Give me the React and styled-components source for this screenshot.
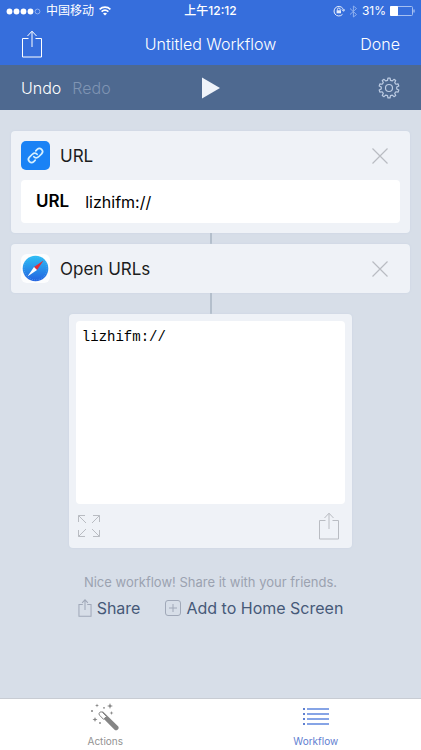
import React, { useState } from "react";
import styled, { createGlobalStyle } from "styled-components";

const COLORS = {
  BLUE: "#366edc",
  SLATE: "#4e6990",
  BACKGROUND: "#d7dee8",
  CARD: "#eff2f7",
  LINE: "#b4bfcc",
  ICON: "#b9bcc2",
  MUTED: "#9ba2b0",
  TEXT: "#465978",
  WHITE: "#ffffff",
};

const GEAR_TEETH = 10;

// outline of the settings wheel, four corners for each tooth
const gearPoints = () => {
  const points = [];
  for (let i = 0; i < GEAR_TEETH; i++) {
    [[-0.3, 7.8], [-0.17, 10], [0.17, 10], [0.3, 7.8]].forEach(([offset, radius]) => {
      const angle = ((i + offset) / GEAR_TEETH) * Math.PI * 2;
      const x = 11 + radius * Math.sin(angle);
      const y = 11 - radius * Math.cos(angle);
      points.push(`${x.toFixed(2)},${y.toFixed(2)}`);
    });
  }
  return points.join(" ");
};

const GearIcon = () => (
  <svg width="22" height="22" viewBox="0 0 22 22" fill="none" stroke="#bdcce3" strokeWidth="1.2" strokeLinejoin="round">
    <polygon points={gearPoints()} />
    <circle cx="11" cy="11" r="3.5" />
  </svg>
);

const ShareIcon = ({ width = 22, height = 28, stroke = 1 }) => (
  <svg width={width} height={height} viewBox="0 0 22 28" fill="none" stroke="currentColor" strokeWidth={stroke}>
    <path d="M7.5 8.5H1.5V27H20.5V8.5H14.5M11 17V1.5M6.5 6L11 1.2L15.5 6" />
  </svg>
);

const CloseIcon = () => (
  <svg width="16" height="16" viewBox="0 0 16 16" stroke="currentColor" strokeWidth="1.2">
    <path d="M.5 .5L15.5 15.5M15.5 .5L.5 15.5" />
  </svg>
);

const ExpandIcon = () => (
  <svg width="22" height="22" viewBox="0 0 22 22" fill="none" stroke="currentColor">
    <path d="M.5 7V.5H7M.5 .5L8 8M15 .5H21.5V7M21.5 .5L14 8M.5 15V21.5H7M.5 21.5L8 14M15 21.5H21.5V15M21.5 21.5L14 14" />
  </svg>
);

const PlusIcon = () => (
  <svg width="16" height="16" viewBox="0 0 16 16" fill="none" stroke="currentColor">
    <rect x=".5" y=".5" width="15" height="15" rx="2.5" />
    <path d="M8 4V12M4 8H12" />
  </svg>
);

const PlayIcon = () => (
  <svg width="18" height="22" viewBox="0 0 18 22" fill="#eff3fa">
    <path d="M0 .5L18 11L0 21.5Z" />
  </svg>
);

const WifiIcon = () => (
  <svg width="12" height="10" viewBox="0 0 12 10" fill="none" stroke="#fff" strokeWidth="1.6">
    <path d="M.6 3.4C3.6 .4 8.4 .4 11.4 3.4M2.6 5.7C4.6 3.8 7.4 3.8 9.4 5.7" />
    <path d="M4 7.4C5.2 6.4 6.8 6.4 8 7.4L6 9.5Z" fill="#fff" stroke="none" />
  </svg>
);

const LockIcon = () => (
  <svg width="12" height="12" viewBox="0 0 12 12" fill="none" stroke="#e4ecfb">
    <path d="M9.5 9.3A4.8 4.8 0 1 1 10.6 5.5M8.9 4.6L10.6 6.3L11.9 4.3" />
    <path d="M4.4 5.5V4.4A1.4 1.4 0 0 1 7.2 4.4V5.5" />
    <rect x="3.6" y="5.3" width="4.4" height="3" fill="#e4ecfb" stroke="none" />
  </svg>
);

const BluetoothIcon = () => (
  <svg width="9" height="13" viewBox="0 0 9 13" fill="none" stroke="#8fb0ef">
    <path d="M1 3.5L7.5 9.5L4.4 12V1L7.5 3.5L1 9.5" />
  </svg>
);

const BatteryIcon = () => (
  <svg width="25" height="10" viewBox="0 0 25 10">
    <rect x=".5" y=".5" width="22" height="9" rx="1" fill="none" stroke="#a5bff1" />
    <rect width="8" height="10" rx="1" fill="#fff" />
    <path d="M23.5 3.5H24.5V6.5H23.5Z" fill="#c8d8f6" />
  </svg>
);

const SignalIcon = () => (
  <svg width="35" height="7" viewBox="0 0 35 7" fill="#fff">
    <circle cx="3.5" cy="3.5" r="2.9" />
    <circle cx="10.5" cy="3.5" r="2.9" />
    <circle cx="17.5" cy="3.5" r="2.9" />
    <circle cx="24.5" cy="3.5" r="2.9" />
    <circle cx="31.5" cy="3.5" r="2.4" fill="none" stroke="#a5bff1" strokeWidth=".8" />
  </svg>
);

const LinkIcon = () => (
  <svg width="29" height="29" viewBox="0 0 29 29">
    <rect width="29" height="29" rx="5" fill="#1a82f5" />
    <g transform="rotate(-45 14.5 14.5)" fill="none" stroke="#d6f0ff" strokeWidth="1.7" strokeLinecap="round">
      <path d="M11 17.6H9A3.1 3.1 0 0 1 9 11.4H13.5A3.1 3.1 0 0 1 16.5 14.8" />
      <path d="M18 11.4H20A3.1 3.1 0 0 1 20 17.6H15.5A3.1 3.1 0 0 1 12.5 14.2" />
    </g>
  </svg>
);

const CompassIcon = () => (
  <svg width="29" height="29" viewBox="0 0 29 29">
    <defs>
      <linearGradient id="sky" x1="0" y1="0" x2="0" y2="1">
        <stop offset="0" stopColor="#2cc0f5" />
        <stop offset="1" stopColor="#2462e0" />
      </linearGradient>
    </defs>
    <rect width="29" height="29" rx="6" fill="#fcfdfe" />
    <circle cx="14.5" cy="14.5" r="12.8" fill="url(#sky)" />
    <circle cx="14.5" cy="14.5" r="11.4" fill="none" stroke="#5fb0f4" strokeDasharray=".6 1.7" />
    <path d="M22.5 6.5L16 16L13 13Z" fill="#e52d35" />
    <path d="M6.5 22.5L16 16L13 13Z" fill="#fff" />
  </svg>
);

const WandIcon = () => (
  <svg width="30" height="28" viewBox="0 0 30 28" fill="#858585">
    <path d="M12.7 8.2L9.2 11.3L24.3 26.5A2.4 2.4 0 0 0 27.8 23Z" />
    <path d="M12.5 9.5A2 2 0 0 0 9.6 12.3L13.5 16.3L16.5 13.5Z" fill="#fff" stroke="#858585" />
    <path d="M20 0L20.8 2.2L23 3L20.8 3.8L20 6L19.2 3.8L17 3L19.2 2.2ZM7 .5L7.5 2L9 2.5L7.5 3L7 4.5L6.5 3L5 2.5L6.5 2ZM5 14L5.7 15.8L7.5 16.5L5.7 17.2L5 19L4.3 17.2L2.5 16.5L4.3 15.8ZM21.5 8L22 9.5L23.5 10L22 10.5L21.5 12L21 10.5L19.5 10L21 9.5Z" />
    <circle cx="2" cy="8" r="1" />
    <circle cx="14" cy="4.8" r=".9" />
    <circle cx="10" cy="20" r=".9" />
  </svg>
);

const ListIcon = () => (
  <svg width="28" height="18" viewBox="0 0 28 18" fill="#5f80d1">
    {[0, 5, 10, 15].map((y) => (
      <g key={y}>
        <rect x="1" y={y} width="2" height="2" />
        <rect x="5" y={y} width="22" height="2" fill="#86a4e6" />
      </g>
    ))}
  </svg>
);

function App() {
  const [url, setUrl] = useState("lizhifm://");

  return (
    <Page>
      <GlobalStyle />
      <StatusBar>
        <StatusGroup>
          <SignalIcon />
          <span>中国移动</span>
          <WifiIcon />
        </StatusGroup>
        <Clock>上午12:12</Clock>
        <StatusGroup $end>
          <LockIcon />
          <BluetoothIcon />
          <span>31%</span>
          <BatteryIcon />
        </StatusGroup>
      </StatusBar>

      <NavBar>
        <BarGroup>
          <PlainButton aria-label="Share workflow"><ShareIcon /></PlainButton>
        </BarGroup>
        <Title>Untitled Workflow</Title>
        <BarGroup $end>
          <PlainButton>Done</PlainButton>
        </BarGroup>
      </NavBar>

      <Toolbar>
        <BarGroup>
          <PlainButton>Undo</PlainButton>
          <PlainButton disabled>Redo</PlainButton>
        </BarGroup>
        <PlainButton aria-label="Run"><PlayIcon /></PlainButton>
        <BarGroup $end>
          <PlainButton aria-label="Settings"><GearIcon /></PlainButton>
        </BarGroup>
      </Toolbar>

      <Content>
        <Card>
          <CardHeader>
            <LinkIcon />
            <CardTitle>URL</CardTitle>
            <IconButton aria-label="Remove URL"><CloseIcon /></IconButton>
          </CardHeader>
          <Field>
            <label htmlFor="url">URL</label>
            <input id="url" type="text" value={url} onChange={(e) => setUrl(e.target.value)} />
          </Field>
        </Card>
        <Connector $height={11} />
        <Card>
          <CardHeader>
            <CompassIcon />
            <CardTitle>Open URLs</CardTitle>
            <IconButton aria-label="Remove Open URLs"><CloseIcon /></IconButton>
          </CardHeader>
        </Card>
        <Connector $height={21} />
        <Preview>
          <Output aria-label="Result" readOnly value={url} />
          <PreviewFooter>
            <IconButton aria-label="Expand"><ExpandIcon /></IconButton>
            <IconButton aria-label="Share result"><ShareIcon /></IconButton>
          </PreviewFooter>
        </Preview>
        <Hint>Nice workflow! Share it with your friends.</Hint>
        <ShareRow>
          <ShareButton><ShareIcon width={14} height={18} stroke={1.6} />Share</ShareButton>
          <ShareButton><PlusIcon />Add to Home Screen</ShareButton>
        </ShareRow>
      </Content>

      <TabBar>
        <Tab href="#actions"><WandIcon />Actions</Tab>
        <Tab href="#workflow" $active><ListIcon />Workflow</Tab>
      </TabBar>
    </Page>
  );
}

const GlobalStyle = createGlobalStyle`
  * {
    box-sizing: border-box;
  }
  body {
    margin: 0;
    font-family: Inter, "Noto Sans CJK SC", sans-serif;
  }
  button, input {
    font-family: inherit;
  }
  svg {
    display: block;
    flex-shrink: 0;
  }
`;

const Page = styled.div`
  min-height: 100vh;
  display: flex;
  flex-direction: column;
  background-color: ${COLORS.BACKGROUND};
`;

const StatusBar = styled.div`
  height: 22px;
  padding: 0 6px;
  display: grid;
  grid-template-columns: 1fr auto 1fr;
  align-items: center;
  font-size: 12px;
  line-height: 22px;
  color: ${COLORS.WHITE};
  background-color: ${COLORS.BLUE};
`;

const StatusGroup = styled.div`
  display: flex;
  align-items: center;
  justify-content: ${(props) => (props.$end ? "flex-end" : "flex-start")};
  gap: ${(props) => (props.$end ? 4 : 5)}px;
`;

const Clock = styled.span`
  font-weight: 500;
`;

const Bar = styled.div`
  display: grid;
  grid-template-columns: 1fr auto 1fr;
  align-items: center;
  padding: 0 21px;
  color: ${COLORS.WHITE};
`;

const NavBar = styled(Bar)`
  height: 43px;
  font-weight: 300;
  background-color: ${COLORS.BLUE};
`;

const Toolbar = styled(Bar)`
  height: 45px;
  font-weight: 300;
  background-color: ${COLORS.SLATE};
`;

const BarGroup = styled.div`
  display: flex;
  justify-content: ${(props) => (props.$end ? "flex-end" : "flex-start")};
  gap: 11px;
`;

const PlainButton = styled.button`
  padding: 0;
  border: none;
  background: none;
  font-size: 16px;
  font-weight: inherit;
  line-height: 24px;
  color: inherit;

  &:disabled {
    color: #7f94b3;
  }
`;

const Title = styled.h1`
  margin: 0;
  font-size: 16px;
  line-height: 24px;
  font-weight: inherit;
`;

const Content = styled.main`
  flex: 1;
  padding: 21px 11px;
  display: flex;
  flex-direction: column;
  align-items: center;
`;

const Card = styled.section`
  width: 100%;
  border-radius: 4px;
  background-color: ${COLORS.CARD};
  box-shadow: 0 0 2px #c9d2df;
`;

const CardHeader = styled.div`
  height: 49px;
  padding: 0 22px 0 10px;
  display: flex;
  align-items: center;
  gap: 10px;
`;

const CardTitle = styled.h2`
  flex: 1;
  margin: 0;
  font-size: 17px;
  line-height: 24px;
  font-weight: 400;
  color: #1c1d20;
`;

const IconButton = styled.button`
  padding: 0;
  border: none;
  background: none;
  color: ${COLORS.ICON};
`;

const Field = styled.div`
  height: 53px;
  padding: 0 10px 10px;
  display: flex;

  label {
    padding: 0 16px 0 15px;
    border-radius: 4px 0 0 4px;
    font-size: 17px;
    line-height: 43px;
    font-weight: 600;
    background-color: ${COLORS.WHITE};
  }
  input {
    flex: 1;
    min-width: 0;
    padding: 0;
    border: none;
    border-radius: 0 4px 4px 0;
    font-size: 16px;
    color: #000;
    background-color: ${COLORS.WHITE};
  }
`;

const Connector = styled.div`
  width: 2px;
  height: ${(props) => props.$height}px;
  background-color: ${COLORS.LINE};
`;

const Preview = styled.section`
  width: 71%;
  padding: 7px 7px 0;
  border-radius: 4px;
  background-color: ${COLORS.CARD};
  box-shadow: 0 0 2px #c9d2df;
`;

const Output = styled.textarea`
  display: block;
  width: 100%;
  height: 183px;
  padding: 6px;
  border: none;
  border-radius: 4px;
  resize: none;
  font-family: "Liberation Mono", monospace;
  font-size: 14px;
  line-height: 20px;
  color: #000;
  background-color: ${COLORS.WHITE};
`;

const PreviewFooter = styled.div`
  height: 44px;
  padding: 0 5px 0 2px;
  display: flex;
  align-items: center;
  justify-content: space-between;
`;

const Hint = styled.p`
  margin: 24px 0 4px;
  font-size: 13px;
  line-height: 20px;
  color: ${COLORS.MUTED};
`;

const ShareRow = styled.div`
  display: flex;
  gap: 25px;
`;

const ShareButton = styled.button`
  padding: 0;
  display: flex;
  align-items: center;
  gap: 5px;
  border: none;
  background: none;
  font-size: 16px;
  line-height: 24px;
  color: ${COLORS.TEXT};

  svg {
    color: #a0a8b8;
  }
`;

const TabBar = styled.nav`
  height: 52px;
  display: flex;
  border-top: 1px solid #c8ccd3;
  background-color: ${COLORS.WHITE};
`;

const Tab = styled.a`
  flex: 1;
  padding-bottom: 2px;
  display: flex;
  flex-direction: column;
  align-items: center;
  justify-content: flex-end;
  gap: ${(props) => (props.$active ? 8 : 3)}px;
  font-size: 10px;
  line-height: 14px;
  text-decoration: none;
  color: ${(props) => (props.$active ? "#5f80d1" : "#929292")};
`;

export default App;
